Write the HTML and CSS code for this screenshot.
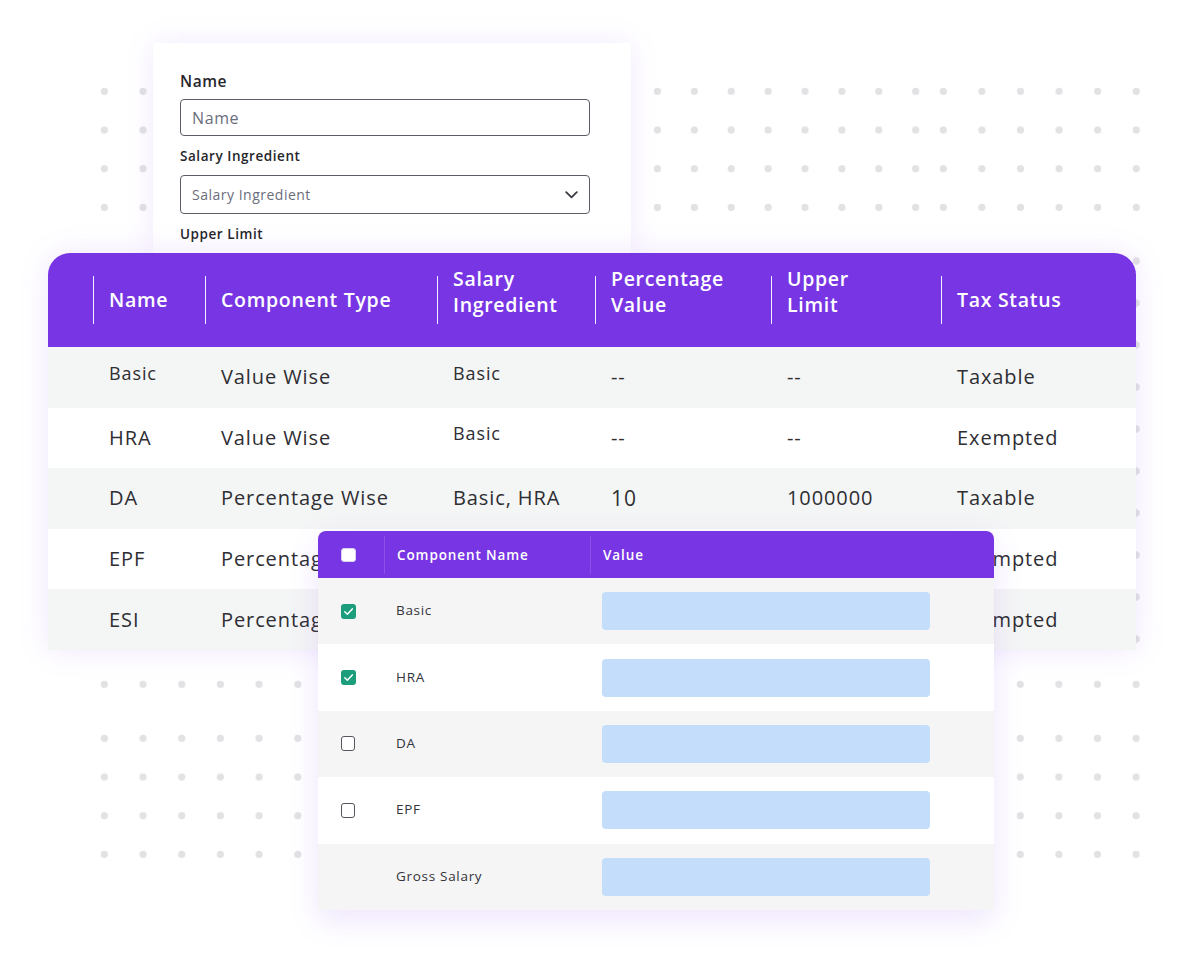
FILE: index.html
```html
<!DOCTYPE html>
<html lang="en">
<head>
<meta charset="utf-8">
<title>Salary Components</title>
<link rel="stylesheet" href="styles.css">
</head>
<body>
<div class="page">
  <div class="dots dots-tl"></div>
  <div class="dots dots-tr-a"></div>
  <div class="dots dots-tr-b"></div>
  <div class="dots dots-edge"></div>
  <div class="dots dots-bl-1"></div>
  <div class="dots dots-bl"></div>
  <div class="dots dots-br-1"></div>
  <div class="dots dots-br"></div>

  <div class="form-card">
    <div class="field-label">Name</div>
    <div class="input">Name</div>
    <div class="field-label small">Salary Ingredient</div>
    <div class="input select">
      <span>Salary Ingredient</span>
      <svg class="chevron" width="13" height="8" viewBox="0 0 13 8"><path d="M1.2 1.2 L6.5 6.4 L11.8 1.2" fill="none" stroke="#3a3a44" stroke-width="1.8" stroke-linecap="round" stroke-linejoin="round"/></svg>
    </div>
    <div class="field-label small">Upper Limit</div>
  </div>

  <div class="main-table">
    <div class="thead">
      <div class="spacer"></div>
      <div class="th"><span>Name</span></div>
      <div class="th"><span>Component Type</span></div>
      <div class="th two"><span>Salary<br>Ingredient</span></div>
      <div class="th two"><span>Percentage<br>Value</span></div>
      <div class="th two"><span>Upper<br>Limit</span></div>
      <div class="th"><span>Tax Status</span></div>
    </div>
    <div class="tr alt">
      <div class="spacer"></div>
      <div class="td up">Basic</div>
      <div class="td">Value Wise</div>
      <div class="td up">Basic</div>
      <div class="td">--</div>
      <div class="td">--</div>
      <div class="td">Taxable</div>
    </div>
    <div class="tr">
      <div class="spacer"></div>
      <div class="td">HRA</div>
      <div class="td">Value Wise</div>
      <div class="td up">Basic</div>
      <div class="td">--</div>
      <div class="td">--</div>
      <div class="td">Exempted</div>
    </div>
    <div class="tr alt">
      <div class="spacer"></div>
      <div class="td">DA</div>
      <div class="td">Percentage Wise</div>
      <div class="td">Basic, HRA</div>
      <div class="td big">10</div>
      <div class="td">1000000</div>
      <div class="td">Taxable</div>
    </div>
    <div class="tr">
      <div class="spacer"></div>
      <div class="td">EPF</div>
      <div class="td">Percentage Wise</div>
      <div class="td"></div>
      <div class="td"></div>
      <div class="td"></div>
      <div class="td">Exempted</div>
    </div>
    <div class="tr alt">
      <div class="spacer"></div>
      <div class="td">ESI</div>
      <div class="td">Percentage Wise</div>
      <div class="td"></div>
      <div class="td"></div>
      <div class="td"></div>
      <div class="td">Exempted</div>
    </div>
  </div>

  <div class="mini-table">
    <div class="mhead">
      <div class="mcell check-cell"><span class="cb cb-head"></span></div>
      <div class="mcell mth">Component Name</div>
      <div class="mcell mth">Value</div>
    </div>
    <div class="mrow alt">
      <div class="mcell check-cell"><span class="cb cb-on"><svg width="15" height="15" viewBox="0 0 15 15"><path d="M3.8 7.8 L6.3 10.2 L11.3 4.9" fill="none" stroke="#fff" stroke-width="1.5" stroke-linecap="round" stroke-linejoin="round"/></svg></span></div>
      <div class="mcell mtd">Basic</div>
      <div class="mcell"><div class="value-bar"></div></div>
    </div>
    <div class="mrow">
      <div class="mcell check-cell"><span class="cb cb-on"><svg width="15" height="15" viewBox="0 0 15 15"><path d="M3.8 7.8 L6.3 10.2 L11.3 4.9" fill="none" stroke="#fff" stroke-width="1.5" stroke-linecap="round" stroke-linejoin="round"/></svg></span></div>
      <div class="mcell mtd">HRA</div>
      <div class="mcell"><div class="value-bar"></div></div>
    </div>
    <div class="mrow alt">
      <div class="mcell check-cell"><span class="cb cb-off"></span></div>
      <div class="mcell mtd">DA</div>
      <div class="mcell"><div class="value-bar"></div></div>
    </div>
    <div class="mrow">
      <div class="mcell check-cell"><span class="cb cb-off"></span></div>
      <div class="mcell mtd">EPF</div>
      <div class="mcell"><div class="value-bar"></div></div>
    </div>
    <div class="mrow alt">
      <div class="mcell check-cell"></div>
      <div class="mcell mtd">Gross Salary</div>
      <div class="mcell"><div class="value-bar"></div></div>
    </div>
  </div>
</div>
</body>
</html>
```

FILE: styles.css
```css
* { box-sizing: border-box; }

html, body {
  margin: 0;
  padding: 0;
  background: #ffffff;
}

body {
  font-family: "Open Sans", "Noto Sans", sans-serif;
  color: #2e2e33;
}

.page {
  position: relative;
  z-index: 0;
  width: 1184px;
  height: 965px;
  padding-top: 43px;
  overflow: hidden;
}

/* ---------- decorative dot grids ---------- */
.dots {
  position: absolute;
  z-index: -1;
  background-image: radial-gradient(circle, #e2e2e4 3.4px, rgba(226,226,228,0) 4px);
  background-size: 38.7px 38.7px;
}
.dots-tl { left: 84.65px; top: 71.65px; width: 77.4px; height: 154.8px; }
.dots-tr-a { left: 638.5px; top: 71.65px; width: 295.2px; height: 154.8px; background-size: 36.9px 38.7px; }
.dots-tr-b { left: 923.7px; top: 71.65px; width: 231.6px; height: 154.8px; background-size: 38.6px 38.7px; }
.dots-edge { left: 1116.7px; top: 240px; width: 38.6px; height: 420px; background-size: 38.6px 42px; }
.dots-bl-1 { left: 84.65px; top: 664.65px; width: 232.2px; height: 38.7px; }
.dots-bl { left: 84.65px; top: 718.65px; width: 232.2px; height: 154.8px; }
.dots-br-1 { left: 1000.7px; top: 664.65px; width: 154.4px; height: 38.7px; background-size: 38.6px 38.7px; }
.dots-br { left: 1000.7px; top: 718.65px; width: 154.4px; height: 154.8px; background-size: 38.6px 38.7px; }

/* ---------- form card ---------- */
.form-card {
  margin-left: 153px;
  width: 478px;
  height: 210px;
  overflow: hidden;
  background: #ffffff;
  border-radius: 4px 4px 0 0;
  box-shadow: 0 0 28px rgba(176, 120, 250, 0.16);
  padding: 28px 0 0 27px;
}

.field-label {
  font-size: 15.5px;
  font-weight: 600;
  letter-spacing: 0.5px;
  line-height: 20px;
  color: #26262b;
  margin-bottom: 8px;
}

.field-label.small {
  font-size: 13.5px;
  letter-spacing: 0.55px;
  line-height: 18px;
  margin-top: 11px;
  margin-bottom: 10px;
}

.input {
  width: 410px;
  height: 37px;
  border: 1px solid #5c5c66;
  border-radius: 4px;
  padding: 0 11px;
  display: flex;
  align-items: center;
  font-size: 16px;
  letter-spacing: 0.6px;
  color: #6b6d7c;
}

.input.select {
  height: 39px;
  font-size: 14px;
  letter-spacing: 0.5px;
  justify-content: space-between;
  padding-right: 11px;
}

.chevron { display: block; }

/* ---------- main table ---------- */
.main-table {
  margin-left: 48px;
  width: 1088px;
  background: #ffffff;
  border-radius: 22px 22px 0 0;
  overflow: hidden;
  box-shadow: 0 0 30px rgba(160, 100, 245, 0.16);
}

.thead, .tr {
  display: grid;
  grid-template-columns: 45px 112px 232px 158px 176px 170px 1fr;
}

.thead {
  height: 94px;
  background: #7835e4;
  align-items: center;
}

.th {
  height: 48px;
  border-left: 1.5px solid rgba(255, 255, 255, 0.92);
  padding-left: 15px;
  display: flex;
  align-items: center;
  color: #ffffff;
  font-size: 19.5px;
  font-weight: 600;
  letter-spacing: 0.7px;
  line-height: 26px;
  white-space: nowrap;
}

.th.two span { margin-bottom: 16px; }

.tr {
  height: 60.6px;
  align-items: center;
  background: #ffffff;
}

.tr.alt { background: #f4f5f5; }

.td {
  padding-left: 16px;
  font-size: 20px;
  letter-spacing: 0.9px;
  line-height: 26px;
  color: #2e2e33;
  white-space: nowrap;
}

.td.up {
  font-size: 18px;
  margin-bottom: 9px;
}

.td.big { font-size: 21px; }

/* ---------- overlay selection table ---------- */
.mini-table {
  position: absolute;
  left: 318px;
  top: 531px;
  width: 676px;
  background: #ffffff;
  border-radius: 8px 8px 0 0;
  overflow: hidden;
  box-shadow: 0 10px 30px rgba(150, 95, 245, 0.16);
}

.mhead, .mrow {
  display: grid;
  grid-template-columns: 66px 206px 1fr;
  align-items: center;
}

.mhead {
  height: 47px;
  background: #7835e4;
}

.mrow {
  height: 66.4px;
  background: #ffffff;
}

.mrow.alt { background: #f5f5f5; }

.check-cell {
  padding-left: 23px;
  display: flex;
  align-items: center;
}

.mth {
  height: 38px;
  display: flex;
  align-items: center;
  border-left: 1px solid rgba(255, 255, 255, 0.14);
  padding-left: 12px;
  color: #ffffff;
  font-size: 13.5px;
  font-weight: 600;
  letter-spacing: 0.9px;
}

.mtd {
  padding-left: 12px;
  font-size: 13.5px;
  letter-spacing: 0.7px;
  color: #33333a;
  margin-bottom: 2px;
}

.cb {
  display: block;
  width: 15px;
  height: 15px;
  border-radius: 3px;
}

.cb-head {
  background: #ffffff;
  border: 1px solid #d9d2ee;
  height: 14px;
}

.cb-on {
  background: #1c9e7d;
}

.cb-on svg { display: block; }

.cb-off {
  width: 14px;
  border: 1.3px solid #55555e;
  background: #ffffff;
}

.value-bar {
  margin-left: 12px;
  width: 328px;
  height: 38px;
  border-radius: 4px;
  background: #c3ddfa;
}
```
